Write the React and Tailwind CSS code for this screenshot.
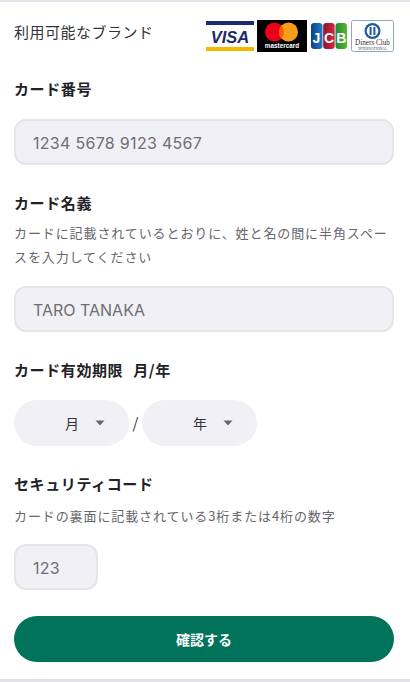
function Visa() {
  return (
    <svg width="48" height="30" viewBox="0 0 48 30" className="block">
      <rect width="48" height="30" fill="#fff" />
      <rect width="48" height="4" fill="#1a2a6c" />
      <rect y="26" width="48" height="4" fill="#f7b600" />
      <text x="24" y="21.5" textAnchor="middle" fontFamily="Liberation Sans" fontWeight="700" fontStyle="italic" fontSize="16.5" fill="#1a2a6c">VISA</text>
    </svg>
  );
}
function Master() {
  return (
    <svg width="50" height="32" viewBox="0 0 50 32" className="block">
      <rect width="50" height="32" fill="#000" />
      <circle cx="17.5" cy="12" r="9.5" fill="#eb001b" />
      <circle cx="31.5" cy="12" r="9.5" fill="#f79e1b" />
      <path d="M24.5 5.6a9.5 9.5 0 0 1 0 12.8a9.5 9.5 0 0 1 0-12.8z" fill="#ff5f00" />
      <text x="25" y="28" textAnchor="middle" fontFamily="Liberation Sans" fontWeight="700" fontSize="6.4" fill="#fff">mastercard</text>
    </svg>
  );
}
function Jcb() {
  return (
    <svg width="36" height="26" viewBox="0 0 36 26" className="block">
      <defs>
        <linearGradient id="jb" x1="0" x2="1" y1="0" y2="0">
          <stop offset="0" stopColor="#123f8f" />
          <stop offset="1" stopColor="#1f7fc4" />
        </linearGradient>
        <linearGradient id="jr" x1="0" x2="1" y1="0" y2="0">
          <stop offset="0" stopColor="#8f1230" />
          <stop offset="1" stopColor="#d9263c" />
        </linearGradient>
        <linearGradient id="jg" x1="0" x2="1" y1="0" y2="0">
          <stop offset="0" stopColor="#1a8a3c" />
          <stop offset="1" stopColor="#5cb531" />
        </linearGradient>
      </defs>
      <rect x="0" width="11.5" height="26" rx="3" fill="url(#jb)" />
      <rect x="12.2" width="11.5" height="26" rx="3" fill="url(#jr)" />
      <rect x="24.5" width="11.5" height="26" rx="3" fill="url(#jg)" />
      <text x="5.5" y="20" textAnchor="middle" fontFamily="Liberation Sans" fontWeight="700" fontSize="14" fill="#fff">J</text>
      <text x="18" y="20" textAnchor="middle" fontFamily="Liberation Sans" fontWeight="700" fontSize="14" fill="#fff">C</text>
      <text x="30.2" y="20" textAnchor="middle" fontFamily="Liberation Sans" fontWeight="700" fontSize="14" fill="#fff">B</text>
    </svg>
  );
}
function Diners() {
  return (
    <svg width="43" height="32" viewBox="0 0 43 32" className="block">
      <rect x="0.5" y="0.5" width="42" height="31" rx="2" fill="#fff" stroke="#8fa8bf" />
      <circle cx="21.5" cy="11" r="8" fill="#1c5c9c" />
      <circle cx="21.5" cy="11" r="5.8" fill="#fff" />
      <rect x="18.6" y="7" width="2" height="8" fill="#1c5c9c" />
      <rect x="22.4" y="7" width="2" height="8" fill="#1c5c9c" />
      <text x="21.5" y="25" textAnchor="middle" fontFamily="Liberation Serif" fontSize="7.2" fill="#333">Diners Club</text>
      <text x="21.5" y="29.5" textAnchor="middle" fontFamily="Liberation Serif" fontSize="3.6" fill="#444">INTERNATIONAL</text>
    </svg>
  );
}

function Label({ children, className = "" }) {
  return <div className={`text-[15px] leading-[22px] font-bold tracking-[0.6px] text-[#222226] ${className}`}>{children}</div>;
}
function Desc({ children, className = "" }) {
  return <div className={`text-[13px] leading-[24px] tracking-[0.9px] text-[#66666c] ${className}`}>{children}</div>;
}
function Field({ children, className = "" }) {
  return (
    <div className={`h-[46px] rounded-[12px] border-2 border-[#e4e4ea] bg-[#f0f0f5] flex items-center pl-[17px] pt-[2px] text-[16px] text-[#6e6e74] font-['Inter','Liberation_Sans',sans-serif] ${className}`}>
      {children}
    </div>
  );
}
function Select({ label }) {
  return (
    <div className="h-[46px] w-[115px] pl-[51px] rounded-full bg-[#f0f0f5] flex items-center text-[14px] text-[#33333a]">
      <span>{label}</span>
      <svg width="10" height="6" viewBox="0 0 10 6" className="ml-[16px]">
        <path d="M0.5 0.5h9L5 5.5z" fill="#66666c" />
      </svg>
    </div>
  );
}

export default function App() {
  return (
    <div className="w-[410px] h-[682px] bg-white overflow-hidden flex flex-col font-['Noto_Sans_CJK_JP','Noto_Sans',sans-serif]">
      <div className="h-[2px] bg-[#e2e2ea]" />
      <div className="flex-1 pl-[14px] pr-[16px] flex flex-col">
        <div className="flex items-center justify-between h-[32px] mt-[14px]">
          <span className="text-[15px] tracking-[0.5px] text-[#333338]">利用可能なブランド</span>
          <div className="flex items-center mt-[8px]">
            <Visa />
            <div className="ml-[3px]"><Master /></div>
            <div className="ml-[4px]"><Jcb /></div>
            <div className="ml-[4px]"><Diners /></div>
          </div>
        </div>

        <Label className="mt-[30px]">カード番号</Label>
        <Field className="mt-[19px] tracking-[0.3px]">1234 5678 9123 4567</Field>

        <Label className="mt-[27px]">カード名義</Label>
        <Desc className="mt-[7px]">カードに記載されているとおりに、姓と名の間に半角スペースを入力してください</Desc>
        <Field className="mt-[17px]">TARO TANAKA</Field>

        <Label className="mt-[27px]">カード有効期限<span className="ml-[10px]">月/年</span></Label>
        <div className="flex items-center mt-[19px]">
          <Select label="月" />
          <span className="w-[13px] text-center text-[15px] text-[#33333a]">/</span>
          <Select label="年" />
        </div>

        <Label className="mt-[27px]">セキュリティコード</Label>
        <Desc className="mt-[9px]">カードの裏面に記載されている3桁または4桁の数字</Desc>
        <Field className="mt-[16px] w-[84px] tracking-[0.3px]">123</Field>

        <button className="mt-[26px] h-[46px] w-full rounded-full bg-[#00735a] text-white text-[14px] font-bold">確認する</button>
      </div>
      <div className="h-[3px] bg-[#e2e2ea]" />
    </div>
  );
}
